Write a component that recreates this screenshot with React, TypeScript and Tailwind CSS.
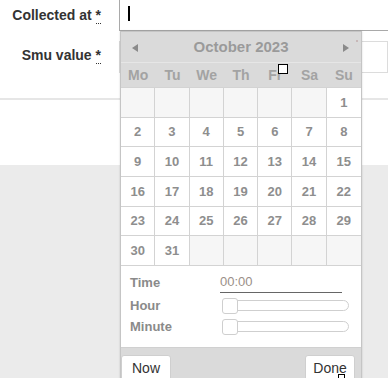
const days = ["Mo", "Tu", "We", "Th", "Fr", "Sa", "Su"];

// October 2023 starts on a Sunday
const cells: (number | null)[] = [
  ...Array(6).fill(null),
  ...Array.from({ length: 31 }, (_, i) => i + 1),
  ...Array(5).fill(null),
];

function Slider() {
  return (
    <div className="relative flex-1 h-[16px] flex items-center">
      <div className="w-full h-[11px] ml-[1px] rounded-full border border-[#cfcfcf] bg-white" />
      <div className="absolute left-0 top-0 w-[16px] h-[16px] rounded-[3px] border border-[#cfcfcf] bg-white" />
    </div>
  );
}

export default function App() {
  return (
    <div
      className="relative w-[388px] h-[378px] overflow-hidden bg-[#ebebeb]"
      style={{ fontFamily: '"Liberation Sans", Arial, sans-serif' }}
    >
      {/* form */}
      <div className="bg-white h-[165px]">
        <div className="flex h-[31px]">
          <label className="w-[119px] shrink-0 pr-[18px] pt-[5px] text-right text-[14px] font-bold text-[#333]">
            Collected at{" "}
            <abbr className="no-underline border-b border-dotted border-[#333]">*</abbr>
          </label>
          <div className="flex-1 border-l border-b border-[#a9a9a9] pl-[8px] pt-[6px]">
            <div className="w-[2px] h-[15px] bg-black" />
          </div>
        </div>
        <div className="flex h-[43px] pt-[10px]">
          <label className="w-[119px] shrink-0 pr-[18px] pt-[4px] text-right text-[14px] font-bold text-[#333]">
            Smu value{" "}
            <abbr className="no-underline border-b border-dotted border-[#333]">*</abbr>
          </label>
          <div className="flex-1 border border-[#dcdcdc] h-[32px]" />
        </div>
        <div className="mt-[24px] h-[2px] bg-[#e6e6e6]" />
      </div>

      {/* datepicker */}
      <div className="absolute left-[120px] top-[31px] w-[242px] border border-[#c5c5c5] bg-white shadow-[0_0_2px_rgba(0,0,0,0.15)]">
        <div className="relative h-[31px] bg-[#dadada] border-b border-[#e6e6e6] flex items-center justify-center">
          <span className="absolute left-[11px] top-[12px] w-0 h-0 border-y-[4px] border-y-transparent border-r-[6px] border-r-[#8a8a8a]" />
          <span className="text-[15px] font-bold text-[#9a9a9a]">October 2023</span>
          <span className="absolute right-[12px] top-[12px] w-0 h-0 border-y-[4px] border-y-transparent border-l-[6px] border-l-[#8a8a8a]" />
          <span className="absolute right-[3px] top-[8px] w-[2px] h-[2px] bg-[#c8b8b8]" />
        </div>
        <div className="grid grid-cols-7 h-[24px] bg-[#dadada]">
          {days.map((d) => (
            <div key={d} className="flex items-center justify-center text-[14px] font-bold text-[#a3a3a3]">
              {d}
            </div>
          ))}
        </div>
        <div className="grid grid-cols-7 auto-rows-[29.7px] border-t border-[#d3d3d3]">
          {cells.map((c, i) => (
            <div
              key={i}
              className={`flex items-center justify-center border-r border-b border-[#d3d3d3] text-[13px] font-bold text-[#8e8e8e] ${
                c ? "bg-white" : "bg-[#f6f6f6]"
              } ${i % 7 === 6 ? "border-r-0" : ""}`}
            >
              {c}
            </div>
          ))}
        </div>
        <div className="h-[81px] px-[9px] pt-[7px] text-[13px] text-[#8a8a8a]">
          <div className="flex items-center h-[19px]">
            <span className="w-[90px] font-bold">Time</span>
            <span className="w-[122px] border-b border-[#666] pb-[1px] text-[#9a8f88]">00:00</span>
          </div>
          <div className="flex items-center h-[21px] mt-[3px]">
            <span className="w-[92px] font-bold">Hour</span>
            <div className="w-[127px]">
              <Slider />
            </div>
          </div>
          <div className="flex items-center h-[21px]">
            <span className="w-[92px] font-bold">Minute</span>
            <div className="w-[127px]">
              <Slider />
            </div>
          </div>
        </div>
        <div className="h-[40px] bg-[#dadada] border-t border-[#d0d0d0] flex justify-between pt-[7px]">
          <button className="h-[30px] w-[50px] pb-[3px] rounded-t-[3px] border border-[#cfcfcf] bg-white text-[14px] text-[#333]">
            Now
          </button>
          <button className="mr-[6px] h-[30px] w-[50px] pb-[3px] rounded-t-[3px] border border-[#cfcfcf] bg-white text-[14px] text-[#333]">
            Done
          </button>
        </div>
      </div>

      {/* pointer markers */}
      <div className="absolute left-[278px] top-[64px] w-[10px] h-[10px] border-[1.5px] border-black bg-white" />
      <div className="absolute left-[338px] top-[374px] w-[7px] h-[8px] border-[1.5px] border-black bg-white" />
    </div>
  );
}
